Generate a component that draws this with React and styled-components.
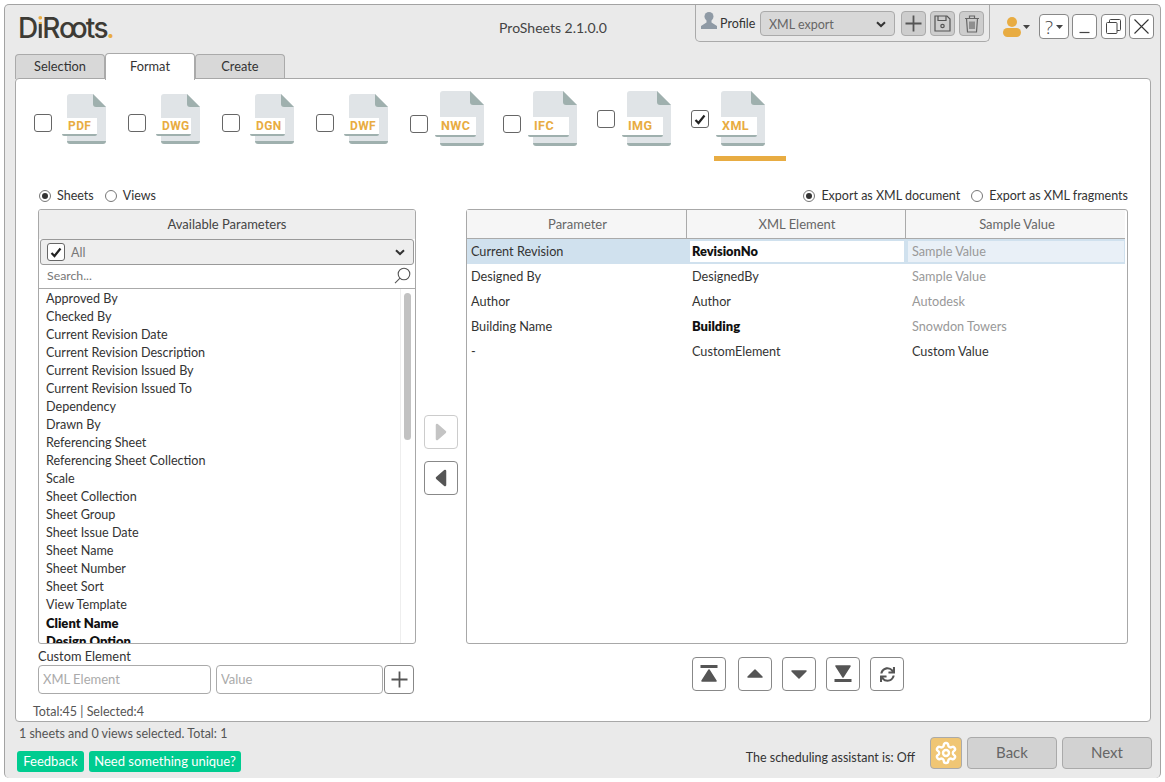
import React from 'react';
import styled, { createGlobalStyle } from 'styled-components';
import { FaSync } from 'react-icons/fa';
import { LuSettings } from 'react-icons/lu';

const GlobalStyle = createGlobalStyle`
    html, body {
        margin: 0;
        padding: 0;
        background: #fff;
    }
    * {
        box-sizing: border-box;
    }
    body {
        font-family: "Lato", "Open Sans", sans-serif;
        font-size: 12.5px;
        color: #333;
    }
`;

const Window = styled.div`
    width: 1157px;
    height: 774px;
    margin: 4px;
    border: 1px solid #a3a3a3;
    border-bottom: 0;
    border-radius: 5px;
    background: #eaeaea;
    display: flex;
    flex-direction: column;
`;

const Header = styled.header`
    height: 48px;
    padding-left: 13px;
    display: flex;
    align-items: flex-start;
`;

const Logo = styled.div`
    width: 94px;
    margin-top: 6px;
    font-family: "Inter", sans-serif;
    font-size: 28px;
    line-height: 34px;
    font-weight: 500;
    letter-spacing: -1.5px;
    color: #3d3b35;
    white-space: nowrap;
`;

const LogoI = styled.span`
    background: linear-gradient(#e8ac42 0 38%, #3d3b35 38% 100%);
    -webkit-background-clip: text;
    background-clip: text;
    color: transparent;
`;

const LogoLoop = styled.span`
    letter-spacing: -5px;
    margin-right: 3px;
`;

const LogoDot = styled.span`
    color: #e8ac42;
    margin-left: -1px;
`;

const Title = styled.div`
    width: 108px;
    margin: 14px 88px 0 387px;
    text-align: center;
    white-space: nowrap;
    font-size: 14px;
    line-height: 18px;
    color: #444;
`;

const ProfileBox = styled.div`
    width: 295px;
    height: 37px;
    padding: 6px 0 0 5px;
    flex: none;
    border: 1px solid #aaa;
    border-top: 0;
    border-radius: 0 0 5px 5px;
    display: flex;
    align-items: flex-start;
`;

const ProfileLabel = styled.span`
    width: 35px;
    margin: 0 5px 0 3px;
    flex: none;
    line-height: 26px;
`;

const ProfileSelect = styled.div`
    width: 135px;
    height: 25px;
    margin-right: 6px;
    padding: 1px 8px 0;
    flex: none;
    display: flex;
    align-items: center;
    justify-content: space-between;
    background: #d8d8d8;
    border: 1px solid #aaa;
    border-radius: 4px;
    color: #666;
`;

const ProfileButton = styled.button`
    width: 25px;
    height: 25px;
    margin-right: 4px;
    padding: 0;
    flex: none;
    display: flex;
    align-items: center;
    justify-content: center;
    background: #cdcdcd;
    border: 1px solid #aaa;
    border-radius: 4px;
`;

const WindowTools = styled.div`
    margin-left: 13px;
    padding-top: 9px;
    display: flex;
    align-items: flex-start;
`;

const UserMenu = styled.div`
    width: 27px;
    height: 25px;
    margin-right: 9px;
    display: flex;
    align-items: center;
    gap: 2px;
`;

const ToolButton = styled.button`
    width: ${props => props.wide ? 30 : 25}px;
    height: 25px;
    margin-right: ${props => props.gap ?? 4}px;
    padding: 0;
    display: flex;
    align-items: center;
    justify-content: center;
    gap: 3px;
    background: #fff;
    border: 1px solid #888;
    border-radius: 4px;
    color: #444;
    font-family: "Open Sans", sans-serif;
    font-weight: 300;
    font-size: 19px;
`;

const TabRow = styled.nav`
    height: 26px;
    margin: 0 0 -1px 10px;
    display: flex;
    align-items: flex-end;
`;

const Tab = styled.div`
    position: relative;
    z-index: ${props => props.active ? 2 : 0};
    width: 90px;
    height: ${props => props.active ? 27 : 25}px;
    margin-bottom: ${props => props.active ? -1 : 0}px;
    padding-bottom: 2px;
    display: flex;
    align-items: center;
    justify-content: center;
    background: ${props => props.active ? '#fff' : '#d8d8d8'};
    border: 1px solid #aaa;
    border-bottom: 0;
    border-radius: 4px 4px 0 0;
    font-size: 12.8px;
    color: #333;
`;

const Panel = styled.main`
    position: relative;
    z-index: 1;
    width: 1136px;
    height: 644px;
    margin-left: 10px;
    background: #fff;
    border: 1px solid #a8a8a8;
    border-radius: 4px;
`;

const FormatRow = styled.div`
    height: 82px;
    padding: 12px 0 0 18px;
    display: flex;
`;

const FormatItem = styled.div`
    width: ${props => props.width || 94}px;
    display: flex;
    flex-direction: column;
`;

const FormatHead = styled.div`
    height: 55px;
    display: flex;
    align-items: flex-start;
`;

const Underline = styled.div`
    width: 72px;
    height: 5px;
    margin: 10px 0 0 23px;
    background: #e8ac42;
`;

const CheckBox = styled.span`
    width: ${props => props.size || 18}px;
    height: ${props => props.size || 18}px;
    margin-top: ${props => props.top || 0}px;
    flex: none;
    display: flex;
    align-items: center;
    justify-content: center;
    background: #fff;
    border: 1px solid #666;
    border-radius: 3px;
`;

const FileIcon = styled.div`
    position: relative;
    flex: none;
    width: ${props => props.large ? 49 : 44}px;
    height: ${props => props.large ? 55 : 50}px;
    margin: ${props => props.large ? '0 0 0 7px' : '3px 0 0 10px'};
    svg {
        position: absolute;
        right: 0;
        top: 0;
    }
`;

const FileLabel = styled.span`
    position: absolute;
    left: 0;
    top: ${props => props.large ? 26 : 24}px;
    width: ${props => props.large ? 41 : 35}px;
    height: ${props => props.large ? 20 : 18}px;
    padding-left: 6px;
    background: #fff;
    border-bottom: 2px solid #9fb0ae;
    border-radius: 0 0 2px 2px;
    color: #e8ac42;
    font-family: "Roboto", sans-serif;
    font-weight: 700;
    font-size: ${props => props.large ? 12.6 : 12}px;
    line-height: ${props => props.large ? 18 : 17}px;
    letter-spacing: 0.4px;
`;

const Content = styled.div`
    padding-left: 22px;
    width: 1112px;
`;

const OptionsRow = styled.div`
    height: 16px;
    margin: 27px 0 5px;
    display: flex;
    justify-content: space-between;
`;

const RadioGroup = styled.div`
    display: flex;
    align-items: center;
    padding-left: 1px;
    line-height: 14px;
`;

const Radio = styled.span`
    width: 12px;
    height: 12px;
    margin: ${props => props.first ? '0 6px 0 0' : '0 6px 0 11px'};
    display: flex;
    align-items: center;
    justify-content: center;
    border: 1px solid #777;
    border-radius: 50%;
    &::after {
        content: '';
        width: 6px;
        height: 6px;
        border-radius: 50%;
        background: ${props => props.on ? '#333' : 'transparent'};
    }
`;

const Columns = styled.div`
    display: grid;
    grid-template-columns: 378px 50px 662px;
`;

const ParamBox = styled.section`
    height: 435px;
    display: flex;
    flex-direction: column;
    border: 1px solid #a8a8a8;
    border-radius: 3px;
    overflow: hidden;
`;

const ParamHead = styled.div`
    height: 29px;
    padding-bottom: 2px;
    flex: none;
    display: flex;
    align-items: center;
    justify-content: center;
    background: #eee;
    font-size: 13px;
    color: #444;
`;

const FilterBar = styled.div`
    height: 26px;
    margin: 0 1px;
    padding: 0 8px 0 6px;
    flex: none;
    display: flex;
    align-items: center;
    gap: 6px;
    background: #eee;
    border: 1px solid #999;
    border-radius: 3px;
    color: #777;
`;

const FilterText = styled.span`
    flex: 1;
`;

const SearchBar = styled.div`
    height: 24px;
    padding: 0 4px 2px 8px;
    flex: none;
    display: flex;
    align-items: center;
    justify-content: space-between;
    border-bottom: 1px solid #aaa;
    color: #777;
    font-size: 12.3px;
`;

const ListArea = styled.div`
    flex: 1;
    min-height: 0;
    display: flex;
    overflow: hidden;
`;

const ParamList = styled.ul`
    flex: 1;
    margin: 0;
    padding: 1px 0 0 7px;
    list-style: none;
    overflow: hidden;
`;

const ParamItem = styled.li`
    height: 18px;
    line-height: 18px;
    font-size: ${props => props.bold ? 13 : 12.6}px;
    font-weight: ${props => props.bold ? 800 : 400};
    color: ${props => props.bold ? '#111' : '#333'};
    white-space: nowrap;
`;

const ScrollTrack = styled.div`
    width: 13px;
    margin-right: 2px;
    padding: 4px 0 0 3px;
    flex: none;
    border-left: 1px solid #eee;
`;

const ScrollThumb = styled.div`
    width: 7px;
    height: 147px;
    border-radius: 4px;
    background: #c2c2c2;
`;

const FieldLabel = styled.div`
    height: 16px;
    margin-top: 4px;
    line-height: 16px;
    font-size: 12.8px;
`;

const FieldRow = styled.div`
    height: 29px;
    margin-top: 1px;
    display: flex;
`;

const Field = styled.input`
    width: ${props => props.w}px;
    height: 29px;
    margin-right: ${props => props.gap}px;
    padding: 0 4px 2px;
    background: #fff;
    border: 1px solid #aaa;
    border-radius: 4px;
    font-family: inherit;
    font-size: 13px;
    outline: none;
    &::placeholder {
        color: #aaa;
        opacity: 1;
    }
`;

const SquareButton = styled.button`
    width: ${props => props.w || 34}px;
    height: ${props => props.h || 34}px;
    margin-right: ${props => props.gap || 0}px;
    padding: 0;
    flex: none;
    display: flex;
    align-items: center;
    justify-content: center;
    background: #fff;
    border: 1px solid ${props => props.disabled ? '#ccc' : '#888'};
    border-radius: 4px;
    color: #555;
`;

const Totals = styled.div`
    height: 16px;
    margin: 10px 0 0 -5px;
    line-height: 16px;
    color: #555;
`;

const TransferColumn = styled.div`
    padding: 206px 0 0 8px;
    display: flex;
    flex-direction: column;
    gap: 12px;
`;

const TableBox = styled.section`
    height: 435px;
    padding-right: 1px;
    border: 1px solid #a8a8a8;
    border-radius: 3px;
`;

const TableRow = styled.div`
    height: ${props => props.head ? 29 : 25}px;
    margin-right: 1px;
    display: grid;
    grid-template-columns: 220px 219px 220px;
    background: ${props => props.head ? '#f6f6f6' : props.selected ? '#d0e1ee' : 'transparent'};
    border-bottom: ${props => props.head ? '1px solid #aaa' : '0'};
`;

const HeadCell = styled.div`
    padding-left: 2px;
    display: flex;
    align-items: center;
    justify-content: center;
    border-right: 1px solid #aaa;
    font-size: 13px;
    color: #666;
    &:last-child {
        border-right: 0;
    }
`;

const Cell = styled.div`
    padding-left: ${props => props.pad || 4}px;
    line-height: 25px;
    font-size: ${props => props.bold ? 13 : 12.7}px;
    font-weight: ${props => props.bold ? 800 : 400};
    color: ${props => props.muted ? '#999' : props.bold ? '#111' : '#333'};
    white-space: nowrap;
`;

const EditCell = styled.div`
    margin: 2px 2px 2px ${props => props.left || 3}px;
    padding-left: ${props => props.pad || 2}px;
    line-height: 21px;
    background: ${props => props.tint ? '#e9f0f7' : '#fff'};
    font-size: ${props => props.tint ? 12.7 : 12.8}px;
    font-weight: ${props => props.tint ? 400 : 800};
    color: ${props => props.tint ? '#999' : '#111'};
`;

const OrderBar = styled.div`
    margin: 13px 0 0 226px;
    display: flex;
    gap: 10px;
`;

const Footer = styled.footer`
    flex: 1;
    padding: 0 8px 0 12px;
    display: flex;
    justify-content: space-between;
`;

const StatusText = styled.div`
    height: 14px;
    margin: 5px 0 10px 2px;
    line-height: 14px;
    color: #555;
`;

const LinkRow = styled.div`
    display: flex;
    gap: 5px;
`;

const LinkButton = styled.button`
    width: ${props => props.w}px;
    height: 21px;
    padding: 0 0 2px;
    background: #00cc90;
    border: 0;
    border-radius: 3px;
    color: #fff;
    font-family: inherit;
    font-size: 13px;
`;

const ActionRow = styled.div`
    margin-top: 15px;
    display: flex;
    align-items: flex-start;
`;

const AssistantText = styled.span`
    margin: 14px 15px 0 0;
    line-height: 14px;
    color: #333;
`;

const GearButton = styled.button`
    width: 32px;
    height: 32px;
    margin-right: 5px;
    padding: 0;
    display: flex;
    align-items: center;
    justify-content: center;
    background: #f0c674;
    border: 1px solid #aaa;
    border-radius: 4px;
    color: #fff;
`;

const NavButton = styled.button`
    width: 90px;
    height: 32px;
    margin-left: ${props => props.gap || 0}px;
    padding: 0 0 2px;
    background: #d2d2d2;
    border: 1px solid #aaa;
    border-radius: 4px;
    color: #666;
    font-family: inherit;
    font-size: 15px;
`;

const formats = [
    { name: 'PDF' },
    { name: 'DWG' },
    { name: 'DGN' },
    { name: 'DWF' },
    { name: 'NWC', large: true, width: 93 },
    { name: 'IFC', large: true },
    { name: 'IMG', large: true, lift: true },
    { name: 'XML', large: true, lift: true, checked: true },
];

const parameters = [
    'Approved By', 'Checked By', 'Current Revision Date', 'Current Revision Description',
    'Current Revision Issued By', 'Current Revision Issued To', 'Dependency', 'Drawn By',
    'Referencing Sheet', 'Referencing Sheet Collection', 'Scale', 'Sheet Collection',
    'Sheet Group', 'Sheet Issue Date', 'Sheet Name', 'Sheet Number', 'Sheet Sort', 'View Template',
];

const rows = [
    { parameter: 'Designed By', element: 'DesignedBy', value: 'Sample Value', muted: true },
    { parameter: 'Author', element: 'Author', value: 'Autodesk', muted: true },
    { parameter: 'Building Name', element: 'Building', value: 'Snowdon Towers', muted: true, bold: true },
    { parameter: '-', element: 'CustomElement', value: 'Custom Value' },
];

const Check = () => (
    <svg width="12" height="11" viewBox="0 0 12 11">
        <path d="M1.5 6 L4.5 9 L10.5 1.5" fill="none" stroke="#222" strokeWidth="2.2" />
    </svg>
);

const Chevron = () => (
    <svg width="10" height="7" viewBox="0 0 10 7">
        <path d="M1 1.2 L5 5 L9 1.2" fill="none" stroke="#333" strokeWidth="2" />
    </svg>
);

const Caret = ({ color = '#444' }) => (
    <svg width="7" height="4" viewBox="0 0 7 4">
        <path d="M0 0 H7 L3.5 4 Z" fill={color} />
    </svg>
);

const Plus = ({ size = 17, color = '#555' }) => (
    <svg width={size} height={size} viewBox="0 0 17 17">
        <path d="M8.5 0.5 V16.5 M0.5 8.5 H16.5" stroke={color} strokeWidth="1.8" />
    </svg>
);

const DocShape = ({ large }) => {
    const w = large ? 44 : 39;
    const h = large ? 55 : 50;
    const fold = large ? 14 : 13;
    return (
        <svg width={w} height={h} viewBox={`0 0 ${w} ${h}`}>
            <path d={`M3 ${h - 6} H${w} V${h - 3} Q${w} ${h} ${w - 3} ${h} H3 Q0 ${h} 0 ${h - 3} Z`} fill="#9fb0ae" />
            <path d={`M3 0 H${w - fold} L${w} ${fold} V${h - 3} H0 V3 Q0 0 3 0 Z`} fill="#e0e4e7" />
            <path d={`M${w - fold} 0 L${w} ${fold} H${w - fold + 3} Q${w - fold} ${fold} ${w - fold} ${fold - 3} Z`} fill="#9fb0ae" />
        </svg>
    );
};

const PersonIcon = () => (
    <svg width="16" height="19" viewBox="0 0 16 19">
        <circle cx="8" cy="5.5" r="4.5" fill="#8f9aa5" />
        <path d="M5.5 9 H10.5 V11.5 L16 15 V18 H0 V15 L5.5 11.5 Z" fill="#8f9aa5" />
    </svg>
);

const UserIcon = () => (
    <svg width="18" height="20" viewBox="0 0 18 20">
        <circle cx="9" cy="5" r="5" fill="#e8ac42" />
        <rect x="0" y="11" width="18" height="9" rx="4.5" fill="#e8ac42" />
    </svg>
);

const SaveIcon = () => (
    <svg width="17" height="17" viewBox="0 0 17 17" fill="none" stroke="#555" strokeWidth="1.2">
        <path d="M1 1 H13 L16 4 V16 H1 Z" />
        <path d="M4 1 V5.5 H12 V1" />
        <circle cx="8.5" cy="11" r="1.7" />
    </svg>
);

const TrashIcon = () => (
    <svg width="16" height="18" viewBox="0 0 16 18" fill="none" stroke="#666" strokeWidth="1.2">
        <path d="M1 3.5 H15 M5.5 3.5 V1 H10.5 V3.5" />
        <path d="M2.5 3.5 L3.5 17 H12.5 L13.5 3.5" />
        <path d="M6 6.5 V14 M8 6.5 V14 M10 6.5 V14" />
    </svg>
);

const SearchIcon = () => (
    <svg width="17" height="17" viewBox="0 0 17 17" fill="none" stroke="#555" strokeWidth="1.1">
        <circle cx="10" cy="7" r="5.8" />
        <path d="M6 11.2 L1 16.2" />
    </svg>
);

const RestoreIcon = () => (
    <svg width="15" height="15" viewBox="0 0 15 15" fill="none" stroke="#444" strokeWidth="1">
        <rect x="0.5" y="3.5" width="10.5" height="11" rx="1" />
        <path d="M3.5 3.5 V1.5 Q3.5 0.5 4.5 0.5 H13.5 Q14.5 0.5 14.5 1.5 V10.5 Q14.5 11.5 13.5 11.5 H11" />
    </svg>
);

const CloseIcon = () => (
    <svg width="15" height="15" viewBox="0 0 15 15">
        <path d="M0.5 0.5 L14.5 14.5 M14.5 0.5 L0.5 14.5" stroke="#333" strokeWidth="1.1" />
    </svg>
);

const MinIcon = () => (
    <svg width="11" height="15" viewBox="0 0 11 15">
        <path d="M0.5 13.5 H10.5" stroke="#444" strokeWidth="1.2" />
    </svg>
);

const Triangle = ({ dir, color = '#555' }) => {
    const paths = {
        right: 'M3 3 L11 10 L3 17 Z',
        left: 'M11 3 L3 10 L11 17 Z',
    };
    return (
        <svg width="14" height="20" viewBox="0 0 14 20">
            <path d={paths[dir]} fill={color} stroke={color} strokeWidth="2.5" strokeLinejoin="round" />
        </svg>
    );
};

const OrderIcon = ({ kind }) => {
    const shapes = {
        top: (
            <>
                <rect x="0.5" y="0" width="17" height="3" fill="#555" />
                <path d="M9 5 L16 16 H2 Z" fill="#555" stroke="#555" strokeWidth="1.5" strokeLinejoin="round" />
            </>
        ),
        up: <path d="M9 5 L16 12 H2 Z" fill="#555" stroke="#555" strokeWidth="1.5" strokeLinejoin="round" />,
        down: <path d="M2 6 H16 L9 13 Z" fill="#555" stroke="#555" strokeWidth="1.5" strokeLinejoin="round" />,
        bottom: (
            <>
                <path d="M2 1 H16 L9 12 Z" fill="#555" stroke="#555" strokeWidth="1.5" strokeLinejoin="round" />
                <rect x="0.5" y="14" width="17" height="3" fill="#555" />
            </>
        ),
    };
    return <svg width="18" height="18" viewBox="0 0 18 18">{shapes[kind]}</svg>;
};

const App = () => (
    <>
        <GlobalStyle />
        <Window>
            <Header>
                <Logo>D<LogoI>i</LogoI>R<LogoLoop>oo</LogoLoop>ts<LogoDot>.</LogoDot></Logo>
                <Title>ProSheets 2.1.0.0</Title>
                <ProfileBox>
                    <PersonIcon />
                    <ProfileLabel>Profile</ProfileLabel>
                    <ProfileSelect>XML export <Chevron /></ProfileSelect>
                    <ProfileButton><Plus /></ProfileButton>
                    <ProfileButton><SaveIcon /></ProfileButton>
                    <ProfileButton><TrashIcon /></ProfileButton>
                </ProfileBox>
                <WindowTools>
                    <UserMenu><UserIcon /><Caret /></UserMenu>
                    <ToolButton wide gap={3}>? <Caret /></ToolButton>
                    <ToolButton><MinIcon /></ToolButton>
                    <ToolButton gap={3}><RestoreIcon /></ToolButton>
                    <ToolButton gap={0}><CloseIcon /></ToolButton>
                </WindowTools>
            </Header>

            <TabRow>
                <Tab>Selection</Tab>
                <Tab active>Format</Tab>
                <Tab>Create</Tab>
            </TabRow>

            <Panel>
                <FormatRow>
                    {formats.map(format => (
                        <FormatItem key={format.name} width={format.width}>
                            <FormatHead>
                                <CheckBox top={format.lift ? 19 : format.large ? 24 : 23}>
                                    {format.checked && <Check />}
                                </CheckBox>
                                <FileIcon large={format.large}>
                                    <DocShape large={format.large} />
                                    <FileLabel large={format.large}>{format.name}</FileLabel>
                                </FileIcon>
                            </FormatHead>
                            {format.checked && <Underline />}
                        </FormatItem>
                    ))}
                </FormatRow>

                <Content>
                    <OptionsRow>
                        <RadioGroup>
                            <Radio first on />Sheets
                            <Radio />Views
                        </RadioGroup>
                        <RadioGroup>
                            <Radio first on />Export as XML document
                            <Radio />Export as XML fragments
                        </RadioGroup>
                    </OptionsRow>

                    <Columns>
                        <div>
                            <ParamBox>
                                <ParamHead>Available Parameters</ParamHead>
                                <FilterBar>
                                    <CheckBox><Check /></CheckBox>
                                    <FilterText>All</FilterText>
                                    <Chevron />
                                </FilterBar>
                                <SearchBar>Search...<SearchIcon /></SearchBar>
                                <ListArea>
                                    <ParamList>
                                        {parameters.map(name => <ParamItem key={name}>{name}</ParamItem>)}
                                        <ParamItem bold>Client Name</ParamItem>
                                        <ParamItem bold>Design Option</ParamItem>
                                    </ParamList>
                                    <ScrollTrack><ScrollThumb /></ScrollTrack>
                                </ListArea>
                            </ParamBox>
                            <FieldLabel>Custom Element</FieldLabel>
                            <FieldRow>
                                <Field w={173} gap={5} placeholder="XML Element" />
                                <Field w={167} gap={1} placeholder="Value" />
                                <SquareButton w={30} h={29}><Plus /></SquareButton>
                            </FieldRow>
                            <Totals>Total:45 | Selected:4</Totals>
                        </div>

                        <TransferColumn>
                            <SquareButton disabled><Triangle dir="right" color="#c4c4c4" /></SquareButton>
                            <SquareButton><Triangle dir="left" /></SquareButton>
                        </TransferColumn>

                        <div>
                            <TableBox>
                                <TableRow head>
                                    <HeadCell>Parameter</HeadCell>
                                    <HeadCell>XML Element</HeadCell>
                                    <HeadCell>Sample Value</HeadCell>
                                </TableRow>
                                <TableRow selected>
                                    <Cell>Current Revision</Cell>
                                    <EditCell>RevisionNo</EditCell>
                                    <EditCell tint pad={4} left={2}>Sample Value</EditCell>
                                </TableRow>
                                {rows.map(row => (
                                    <TableRow key={row.element}>
                                        <Cell>{row.parameter}</Cell>
                                        <Cell pad={5} bold={row.bold}>{row.element}</Cell>
                                        <Cell pad={6} muted={row.muted}>{row.value}</Cell>
                                    </TableRow>
                                ))}
                            </TableBox>
                            <OrderBar>
                                <SquareButton gap={2}><OrderIcon kind="top" /></SquareButton>
                                <SquareButton><OrderIcon kind="up" /></SquareButton>
                                <SquareButton><OrderIcon kind="down" /></SquareButton>
                                <SquareButton><OrderIcon kind="bottom" /></SquareButton>
                                <SquareButton><FaSync size={15} /></SquareButton>
                            </OrderBar>
                        </div>
                    </Columns>
                </Content>
            </Panel>

            <Footer>
                <div>
                    <StatusText>1 sheets and 0 views selected. Total: 1</StatusText>
                    <LinkRow>
                        <LinkButton w={67}>Feedback</LinkButton>
                        <LinkButton w={152}>Need something unique?</LinkButton>
                    </LinkRow>
                </div>
                <ActionRow>
                    <AssistantText>The scheduling assistant is: Off</AssistantText>
                    <GearButton><LuSettings size={24} strokeWidth={2.4} /></GearButton>
                    <NavButton>Back</NavButton>
                    <NavButton gap={5}>Next</NavButton>
                </ActionRow>
            </Footer>
        </Window>
    </>
);

export default App;
